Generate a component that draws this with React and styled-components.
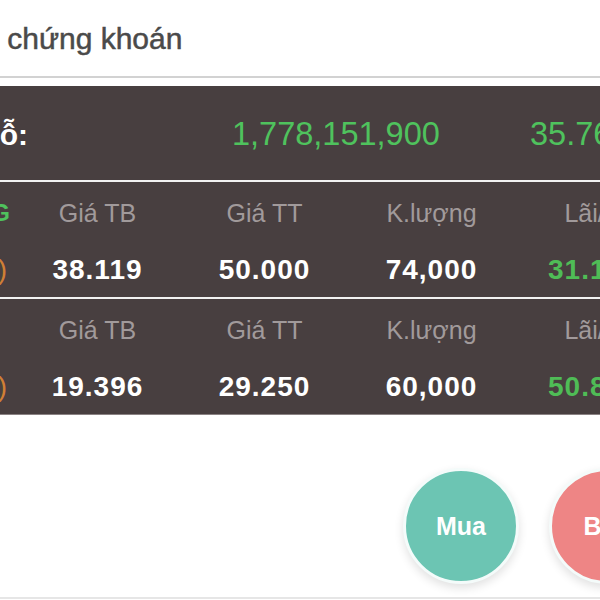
import React from "react";
import styled, { createGlobalStyle } from "styled-components";

const Global = createGlobalStyle`
  html, body { margin: 0; padding: 0; background: #ffffff; }
  body { font-family: "Liberation Sans", Arial, sans-serif; }
`;

const Page = styled.div`
  width: 600px;
  height: 600px;
  overflow: hidden;
  background: #ffffff;
  display: flex;
  flex-direction: column;
`;

const Header = styled.div`
  height: 78px;
  border-bottom: 2px solid #d2d2d2;
  padding-top: 21px;
  box-sizing: border-box;
  white-space: nowrap;
  flex: none;
`;

const Title = styled.div`
  margin-left: -233px;
  font-size: 30px;
  line-height: 36px;
  color: #4a4a4a;
  -webkit-text-stroke: 0.5px #4a4a4a;
`;

const Panel = styled.div`
  margin-top: 8px;
  background: #483f40;
  flex: none;
  overflow: hidden;
  border-bottom: 1px solid #8a8283;
`;

const Shift = styled.div`
  margin-left: -153px;
  width: 900px;
`;

const Summary = styled.div`
  height: 96px;
  padding-top: 3px;
  box-sizing: border-box;
  display: grid;
  grid-template-columns: 385px 298px auto;
  align-items: center;
  border-bottom: 2px solid #f2f2f2;
  white-space: nowrap;
`;

const SummaryLabel = styled.div`
  justify-self: end;
  margin-right: 204px;
  color: #ffffff;
  font-weight: 700;
  font-size: 30px;
`;

const SummaryValue = styled.div`
  color: #4fc25d;
  font-size: 32.5px;
`;

const Row = styled.div`
  display: grid;
  grid-template-columns: repeat(5, 167px);
  grid-template-rows: 30px 34px;
  row-gap: 25px;
  padding: 16px 0 10px;
  border-bottom: ${(p) => (p.$last ? "none" : "2px solid #f2f2f2")};
  white-space: nowrap;
`;

const Head = styled.div`
  text-align: center;
  font-size: 25px;
  line-height: 30px;
  color: #a19a9b;
`;

const Code = styled.div`
  justify-self: start;
  margin-left: 111px;
  font-size: 24px;
  line-height: 30px;
  font-weight: 700;
  color: #4fc25d;
`;

const Change = styled.div`
  justify-self: end;
  margin-right: 7px;
  font-size: 28px;
  line-height: 34px;
  color: #d07f35;
`;

const Value = styled.div`
  text-align: center;
  font-size: 28px;
  line-height: 34px;
  font-weight: 700;
  letter-spacing: 1px;
  color: ${(p) => (p.$green ? "#4fbc56" : "#ffffff")};
`;

const Actions = styled.div`
  flex: none;
  display: flex;
  gap: 30px;
  padding: 53px 0 13px 403px;
  border-bottom: 2px solid #e6e6e6;
`;

const Circle = styled.button`
  flex: none;
  width: 116px;
  height: 116px;
  border-radius: 50%;
  border: 3px solid #f4fbfa;
  box-sizing: border-box;
  background: ${(p) => p.$bg};
  box-shadow: 0 4px 10px rgba(0, 0, 0, 0.12);
  color: #ffffff;
  font-family: "Liberation Sans", Arial, sans-serif;
  font-size: 25px;
  font-weight: 700;
  display: flex;
  align-items: center;
  justify-content: center;
  padding: 0;
`;

const rows = [
  { code: "HPG", change: "(10.000)", tb: "38.119", tt: "50.000", kl: "74,000", pl: "31.17%" },
  { code: "VIC", change: "(20.000)", tb: "19.396", tt: "29.250", kl: "60,000", pl: "50.80%" },
];

export default function App() {
  return (
    <>
      <Global />
      <Page>
        <Header>
          <Title>Danh mục đầu tư chứng khoán</Title>
        </Header>
        <Panel>
          <Shift>
            <Summary>
              <SummaryLabel>Tổng lãi/lỗ:</SummaryLabel>
              <SummaryValue>1,778,151,900</SummaryValue>
              <SummaryValue>35.76%</SummaryValue>
            </Summary>
            {rows.map((r, i) => (
              <Row key={r.code} $last={i === rows.length - 1}>
                <Code>{r.code}</Code>
                <Head>Giá TB</Head>
                <Head>Giá TT</Head>
                <Head>K.lượng</Head>
                <Head>Lãi/Lỗ</Head>
                <Change>{r.change}</Change>
                <Value>{r.tb}</Value>
                <Value>{r.tt}</Value>
                <Value>{r.kl}</Value>
                <Value $green>{r.pl}</Value>
              </Row>
            ))}
          </Shift>
        </Panel>
        <Actions>
          <Circle $bg="#6cc5b3">Mua</Circle>
          <Circle $bg="#ee8585">Bán</Circle>
        </Actions>
      </Page>
    </>
  );
}
